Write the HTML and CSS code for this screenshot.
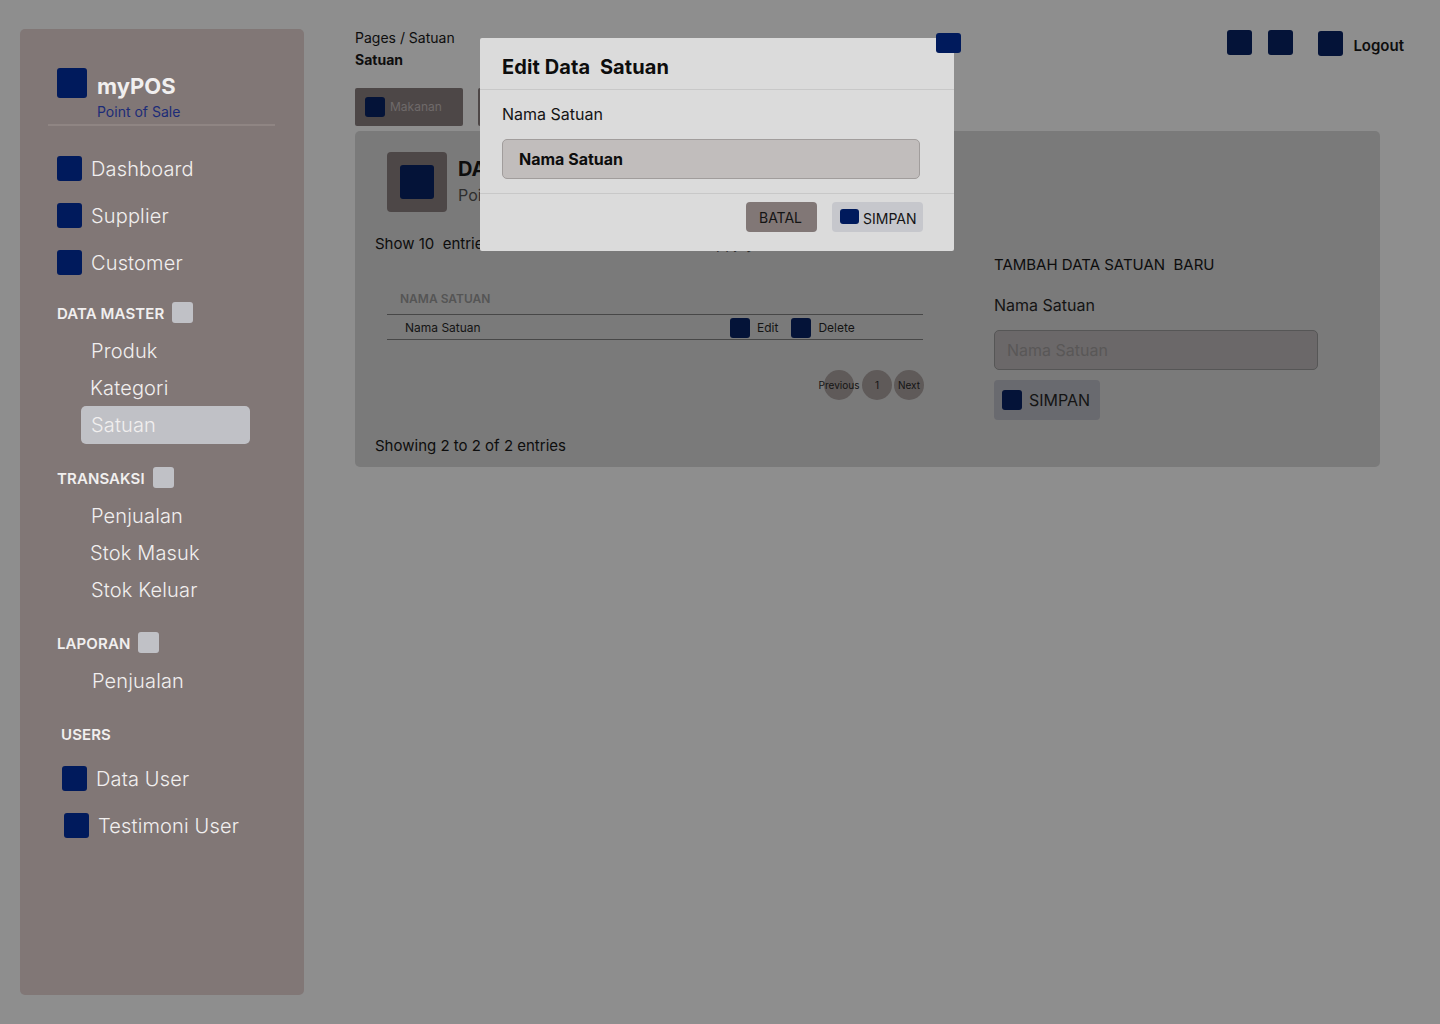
FILE: index.html
```html
<!DOCTYPE html>
<html lang="id">

<head>
    <meta charset="UTF-8">
    <meta name="viewport" content="width=device-width, initial-scale=1.0">
    <title>myPOS - Satuan</title>
    <link rel="stylesheet" href="styles.css">
</head>

<body>
    <aside class="sidebar">
        <div class="brand">
            <span class="icon icon-brand"></span>
            <div class="brand-text">
                <div class="brand-name">myPOS</div>
                <div class="brand-sub">Point of Sale</div>
            </div>
        </div>

        <nav class="nav-main">
            <a class="nav-item"><span class="icon"></span>Dashboard</a>
            <a class="nav-item"><span class="icon"></span>Supplier</a>
            <a class="nav-item"><span class="icon"></span>Customer</a>
        </nav>

        <div class="nav-title">DATA MASTER <span class="chevron"></span></div>
        <a class="sub-item">Produk</a>
        <a class="sub-item sub-left">Kategori</a>
        <a class="sub-item active">Satuan</a>

        <div class="nav-title title-gap">TRANSAKSI <span class="chevron"></span></div>
        <a class="sub-item">Penjualan</a>
        <a class="sub-item sub-left">Stok Masuk</a>
        <a class="sub-item">Stok Keluar</a>

        <div class="nav-title title-gap">LAPORAN <span class="chevron"></span></div>
        <a class="sub-item sub-right">Penjualan</a>

        <div class="nav-title users-title">USERS</div>
        <a class="nav-item user-item"><span class="icon"></span>Data User</a>
        <a class="nav-item testi-item"><span class="icon"></span>Testimoni User</a>
    </aside>

    <main class="main">
        <header class="topbar">
            <div class="crumbs">
                <div>Pages / Satuan</div>
                <div class="crumb-title">Satuan</div>
            </div>
            <div class="top-actions">
                <span class="icon dark"></span>
                <span class="icon dark"></span>
                <a class="logout"><span class="icon dark"></span><span class="logout-text">Logout</span></a>
            </div>
        </header>

        <div class="tabs">
            <div class="tab"><span class="icon dark icon-tab"></span>Makanan</div>
            <div class="tab"></div>
        </div>

        <section class="card">
            <div class="card-left">
                <div class="card-head">
                    <div class="head-box"><span class="icon dark head-icon"></span></div>
                    <div>
                        <div class="head-title">DATA SATUAN</div>
                        <div class="head-sub">Point of Sale</div>
                    </div>
                </div>
                <div class="table-tools">
                    <span>Show 10&nbsp; entries</span>
                    <span class="search-label">ppjay</span>
                </div>
                <table class="data-table">
                    <tr>
                        <th colspan="2">NAMA SATUAN</th>
                    </tr>
                    <tr>
                        <td>Nama Satuan</td>
                        <td class="actions">
                            <div class="row-actions">
                                <span class="icon dark icon-row"></span>Edit
                                <span class="icon dark icon-row icon-del"></span>Delete
                            </div>
                        </td>
                    </tr>
                </table>
                <div class="pager">
                    <span class="page-btn">Previous</span>
                    <span class="page-btn">1</span>
                    <span class="page-btn">Next</span>
                </div>
                <div class="table-info">Showing 2 to 2 of 2 entries</div>
            </div>

            <form class="card-form">
                <div class="form-title">TAMBAH DATA SATUAN&nbsp; BARU</div>
                <label class="form-label">Nama Satuan</label>
                <input class="form-input" type="text" placeholder="Nama Satuan">
                <button class="btn-save" type="button"><span class="icon dark"></span>SIMPAN</button>
            </form>
        </section>
    </main>

    <div class="modal">
        <span class="icon modal-close"></span>
        <div class="modal-head">Edit Data&nbsp; Satuan</div>
        <div class="modal-body">
            <label class="modal-label">Nama Satuan</label>
            <input class="modal-input" type="text" value="Nama Satuan">
        </div>
        <div class="modal-foot">
            <button class="btn-cancel" type="button">BATAL</button>
            <button class="btn-ok" type="button"><span class="icon icon-ok"></span>SIMPAN</button>
        </div>
    </div>
</body>

</html>
```

FILE: styles.css
```css
* {
    box-sizing: border-box;
}

body {
    margin: 0;
    height: 1024px;
    overflow: hidden;
    display: flex;
    align-items: flex-start;
    background-color: #8e8e8e;
    color: #0d0d0d;
    font-family: Inter, "Liberation Sans", sans-serif;
}

.icon {
    display: inline-block;
    flex: none;
    width: 25px;
    height: 25px;
    border-radius: 3px;
    background-color: #001a5c;
}

.icon.dark {
    background-color: #041338;
}

/* sidebar */
.sidebar {
    flex: none;
    width: 284px;
    height: 966px;
    margin: 29px 0 0 20px;
    padding: 39px 30px 0 37px;
    background-color: #817776;
    border-radius: 5px;
    color: #f1efef;
}

.brand {
    position: relative;
    display: flex;
    gap: 10px;
    height: 58px;
}

.brand::after {
    content: "";
    position: absolute;
    left: -9px;
    right: -1px;
    bottom: 0;
    height: 2px;
    background-color: #8f8583;
}

.icon-brand {
    width: 30px;
    height: 30px;
}

.brand-name {
    margin-top: 4px;
    font-size: 22px;
    line-height: 29px;
    font-weight: 700;
}

.brand-sub {
    margin-top: 2px;
    font-size: 14px;
    line-height: 17px;
    color: #1c2c78;
}

.nav-main {
    margin-top: 30px;
}

.nav-item {
    display: flex;
    align-items: center;
    gap: 9px;
    height: 25px;
    margin-bottom: 22px;
    font-size: 20px;
    font-weight: 300;
    letter-spacing: 0.15px;
}

.nav-title {
    display: flex;
    align-items: flex-start;
    gap: 8px;
    height: 21px;
    margin-bottom: 9px;
    font-size: 15px;
    font-weight: 600;
    line-height: 23px;
    letter-spacing: 0.1px;
}

.nav-main + .nav-title {
    margin-top: 27px;
}

.chevron {
    width: 21px;
    height: 21px;
    border-radius: 3px;
    background-color: #c0c1c6;
}

.title-gap {
    margin-top: 24px;
}

.sub-item {
    display: block;
    height: 37px;
    padding-left: 34px;
    font-size: 20px;
    font-weight: 300;
    line-height: 39px;
    letter-spacing: 0.15px;
}

.sub-left {
    padding-left: 33px;
}

.sub-right {
    padding-left: 35px;
}

.sub-item.active {
    width: 169px;
    height: 38px;
    margin-left: 24px;
    margin-bottom: -1px;
    padding-left: 10px;
    background-color: #c0c1c6;
    border-radius: 5px;
    line-height: 38px;
}

.users-title {
    margin-top: 25px;
    margin-bottom: 21px;
    padding-left: 4px;
    line-height: 21px;
}

.user-item {
    margin-left: 5px;
}

.testi-item {
    margin-left: 7px;
}

/* main */
.main {
    flex: none;
    width: 1025px;
    margin-left: 51px;
    padding-top: 29px;
}

.topbar {
    display: flex;
    justify-content: space-between;
    height: 59px;
}

.crumbs {
    font-size: 14px;
    line-height: 18px;
}

.crumb-title {
    margin-top: 4px;
    font-weight: 700;
}

.top-actions {
    display: flex;
    align-items: flex-start;
    gap: 16px;
    margin-right: -24px;
    padding-top: 1px;
}

.logout {
    display: flex;
    align-items: flex-start;
    gap: 10px;
    margin-left: 9px;
    padding-top: 1px;
    font-size: 15px;
    font-weight: 600;
}

.logout-text {
    margin-top: 6px;
    line-height: 18px;
}

.tabs {
    display: flex;
    gap: 15px;
    height: 38px;
}

.tab {
    display: flex;
    align-items: center;
    gap: 5px;
    width: 108px;
    padding-left: 10px;
    padding-bottom: 1px;
    background-color: #4d4747;
    border-radius: 2px;
    color: #6f6a6a;
    font-size: 12px;
}

.icon-tab {
    width: 20px;
    height: 20px;
}

.card {
    display: flex;
    height: 336px;
    margin-top: 5px;
    background-color: #7a7a7a;
    border-radius: 5px;
}

.card-left {
    flex: none;
    width: 639px;
    padding: 21px 0 0 20px;
}

.card-head {
    display: flex;
    gap: 11px;
    margin-left: 12px;
}

.head-box {
    display: flex;
    align-items: center;
    justify-content: center;
    width: 60px;
    height: 60px;
    background-color: #4d4747;
    border-radius: 4px;
}

.head-icon {
    width: 34px;
    height: 34px;
}

.head-title {
    margin-top: 5px;
    font-size: 20px;
    line-height: 24px;
    font-weight: 700;
}

.head-sub {
    margin-top: 4px;
    font-size: 16px;
    line-height: 20px;
    color: #2e2e2e;
}

.table-tools {
    display: grid;
    grid-template-columns: 341px auto;
    margin-top: 23px;
    font-size: 15px;
    line-height: 18px;
}

.search-label {
    color: #2e2e2e;
}

.data-table {
    width: 536px;
    margin: 27px 0 0 12px;
    border-collapse: collapse;
    font-size: 12px;
}

.data-table th {
    height: 34px;
    padding: 4px 0 0 13px;
    border-bottom: 1px solid #474747;
    color: #555555;
    font-weight: 600;
    text-align: left;
}

.data-table td {
    height: 25px;
    padding: 2px 0 0 18px;
    border-bottom: 1px solid #474747;
    color: #141414;
}

.data-table .actions {
    width: 193px;
    padding-left: 0;
}

.row-actions {
    display: flex;
    align-items: center;
}

.icon-row {
    width: 20px;
    height: 20px;
    margin-right: 7px;
}

.icon-del {
    margin-left: 13px;
}

.pager {
    display: flex;
    justify-content: flex-end;
    gap: 2px;
    width: 549px;
    margin-top: 30px;
}

.page-btn {
    display: flex;
    align-items: center;
    justify-content: center;
    width: 30px;
    height: 30px;
    background-color: #5f5a59;
    border-radius: 50%;
    color: #141414;
    font-size: 10px;
}

.page-btn:first-child {
    margin-right: 6px;
}

.table-info {
    margin-top: 37px;
    font-size: 15px;
    line-height: 18px;
}

.card-form {
    padding-top: 125px;
}

.form-title {
    font-size: 15px;
    line-height: 18px;
}

.form-label {
    display: block;
    margin-top: 21px;
    font-size: 16px;
    line-height: 20px;
    color: #141414;
}

.form-input {
    display: block;
    width: 324px;
    height: 40px;
    margin-top: 15px;
    padding: 0 12px;
    background-color: #6b6869;
    border: 1px solid #565656;
    border-radius: 5px;
    font: 16px Inter, "Liberation Sans", sans-serif;
}

.form-input::placeholder {
    color: #595757;
    opacity: 1;
}

.btn-save {
    display: flex;
    align-items: center;
    gap: 7px;
    width: 106px;
    height: 40px;
    margin-top: 10px;
    padding: 0 0 0 8px;
    background-color: #696a6f;
    border: 0;
    border-radius: 4px;
    color: #141414;
    font: 16px Inter, "Liberation Sans", sans-serif;
}

.btn-save .icon {
    width: 20px;
    height: 20px;
}

/* modal */
.modal {
    position: absolute;
    left: 480px;
    top: 38px;
    width: 474px;
    height: 213px;
    background-color: #dbdbdb;
    border-radius: 2px;
}

.modal-close {
    position: absolute;
    right: -7px;
    top: -5px;
    width: 25px;
    height: 20px;
}

.modal-head {
    height: 52px;
    padding: 17px 22px 0;
    border-bottom: 1px solid #c8c8c8;
    font-size: 20px;
    line-height: 24px;
    font-weight: 700;
    letter-spacing: 0.1px;
}

.modal-body {
    height: 104px;
    padding: 14px 22px 0;
    border-bottom: 1px solid #c8c8c8;
}

.modal-label {
    display: block;
    font-size: 16px;
    line-height: 20px;
    color: #141414;
}

.modal-input {
    display: block;
    width: 418px;
    height: 40px;
    margin-top: 15px;
    padding: 0 16px;
    background-color: #c1bdbc;
    border: 1px solid #a19d9c;
    border-radius: 5px;
    color: #0d0d0d;
    font: 700 16px Inter, "Liberation Sans", sans-serif;
}

.modal-foot {
    display: flex;
    justify-content: flex-end;
    gap: 15px;
    padding: 8px 31px 0 0;
}

.btn-cancel,
.btn-ok {
    height: 30px;
    border: 0;
    border-radius: 4px;
    color: #141414;
    font: 14px Inter, "Liberation Sans", sans-serif;
}

.btn-cancel {
    width: 71px;
    padding: 0 2px 0 0;
    background-color: #817776;
}

.btn-ok {
    display: flex;
    align-items: center;
    gap: 4px;
    width: 91px;
    padding: 2px 0 0 8px;
    background-color: #c6c7cc;
}

.icon-ok {
    width: 19px;
    height: 15px;
    margin-top: -3px;
}
```
